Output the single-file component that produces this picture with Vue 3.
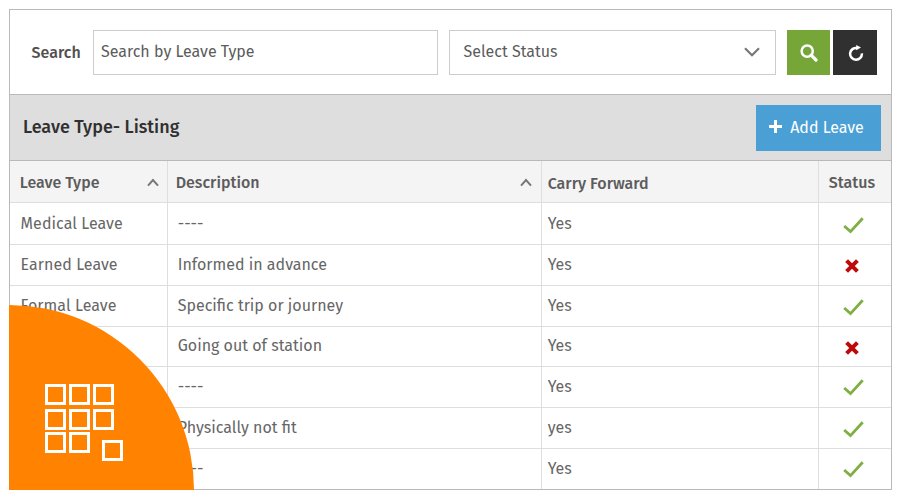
<script setup>
const rows = [
  { type: 'Medical Leave', description: '----', carry: 'Yes', active: true, height: 42 },
  { type: 'Earned Leave', description: 'Informed in advance', carry: 'Yes', active: false, height: 41 },
  { type: 'Formal Leave', description: 'Specific trip or journey', carry: 'Yes', active: true, height: 41 },
  { type: '', description: 'Going out of station', carry: 'Yes', active: false, height: 40, tight: true },
  { type: '', description: '----', carry: 'Yes', active: true, height: 41, raised: true },
  { type: '', description: 'Physically not fit', carry: 'yes', active: true, height: 41 },
  { type: '', description: '----', carry: 'Yes', active: true, height: 40, raised: true },
]
const squares = [
  [0, 0], [24, 0], [48, 0],
  [0, 25], [24, 25], [48, 25],
  [0, 48], [24, 48], [57, 56],
]
</script>

<template>
  <div class="page">
    <main class="panel">
      <div class="filters">
        <label class="label">Search</label>
        <div class="field search-field">Search by Leave Type</div>
        <div class="field select-field">
          <span>Select Status</span>
          <svg width="16" height="10" viewBox="0 0 16 10"><path d="M1 1.2 8 8.2 15 1.2" fill="none" stroke="#777" stroke-width="2.2" /></svg>
        </div>
        <button class="btn btn-search">
          <svg width="18" height="18" viewBox="0 0 18 18" fill="none" stroke="#fff">
            <circle cx="7.2" cy="7.1" r="5.6" stroke-width="2.5" />
            <path d="M11.2 11.2 16 16" stroke-width="3.2" stroke-linecap="round" />
          </svg>
        </button>
        <button class="btn btn-reset">
          <svg width="16" height="16" viewBox="0 0 16 16">
            <path d="M9.5 3.1A5.9 5.9 0 1 0 13.9 8.3" fill="none" stroke="#fff" stroke-width="2.5" />
            <path d="M8.2 0 13 2.6 8.2 5.2Z" fill="#fff" />
          </svg>
        </button>
      </div>

      <div class="titlebar">
        <h1>Leave Type- Listing</h1>
        <button class="add">
          <svg width="13" height="13" viewBox="0 0 13 13"><path d="M6.5 0V13M0 6.5H13" stroke="#fff" stroke-width="3" /></svg>
          <span>Add Leave</span>
        </button>
      </div>

      <div class="row head">
        <div class="cell type"><span>Leave Type</span>
          <svg width="12" height="9" viewBox="0 0 12 9"><path d="M1 7.6 6 2 11 7.6" fill="none" stroke="#777" stroke-width="2" /></svg>
        </div>
        <div class="cell desc"><span>Description</span>
          <svg width="12" height="9" viewBox="0 0 12 9"><path d="M1 7.6 6 2 11 7.6" fill="none" stroke="#777" stroke-width="2" /></svg>
        </div>
        <div class="cell carry">Carry Forward</div>
        <div class="cell status">Status</div>
      </div>
      <div
        v-for="(row, i) in rows"
        :key="i"
        class="row"
        :class="{ tight: row.tight, raised: row.raised }"
        :style="{ height: row.height + 'px' }"
      >
        <div class="cell type">{{ row.type }}</div>
        <div class="cell desc">{{ row.description }}</div>
        <div class="cell carry">{{ row.carry }}</div>
        <div class="cell status">
          <svg v-if="row.active" class="check" width="21" height="17" viewBox="0 0 21 17"><path d="M1.2 9 7.5 14.6 19.7 1.3" fill="none" stroke="#7fae43" stroke-width="2.8" /></svg>
          <svg v-else class="cross" width="14" height="14" viewBox="0 0 14 14"><path d="M1.6 1.6 12.4 12.4M12.4 1.6 1.6 12.4" stroke="#bd0b0b" stroke-width="4" /></svg>
        </div>
      </div>
    </main>

    <div class="badge">
      <svg width="78" height="77" viewBox="0 0 78 77" fill="none" stroke="#fff" stroke-width="3">
        <rect v-for="([x, y], i) in squares" :key="i" :x="x + 1.5" :y="y + 1.5" width="18" height="18" />
      </svg>
    </div>
  </div>
</template>

<style>
body { margin: 0; background: #fff; }
</style>

<style scoped>
* { box-sizing: border-box; }
.page {
  position: relative;
  width: 900px;
  height: 500px;
  padding: 9px 8px 10px 9px;
  overflow: hidden;
  background: #fff;
  color: #666;
  font: 16px/20px "Fira Sans", "Noto Sans", sans-serif;
}
.panel {
  display: flex;
  flex-direction: column;
  height: 481px;
  border: 1px solid #b9b9b9;
}
.filters {
  display: flex;
  flex: none;
  align-items: flex-start;
  height: 84px;
  padding: 20px 14px 0 21px;
}
.label {
  width: 62px;
  padding: 13px 0 0 0.6px;
  font-weight: 500;
  color: #505050;
}
.field {
  display: flex;
  align-items: center;
  height: 45px;
  border: 1px solid #ccc;
  padding-bottom: 2px;
  color: #5c5c5c;
}
.search-field { width: 345px; padding-left: 7px; }
.select-field {
  justify-content: space-between;
  width: 327px;
  margin-left: 11px;
  padding: 0 15px 2px 13.5px;
}
.select-field svg { margin-top: 1px; }
button {
  display: flex;
  align-items: center;
  justify-content: center;
  border: 0;
  padding: 0;
  font: inherit;
}
.btn { height: 45px; }
.btn-search { width: 43px; margin-left: 11px; background: #75a637; }
.btn-reset { width: 44px; margin-left: 3px; padding-left: 1px; background: #303031; }
.titlebar {
  display: flex;
  flex: none;
  align-items: center;
  justify-content: space-between;
  height: 67px;
  padding: 0 10px 0 13px;
  border: solid #b9b9b9;
  border-width: 1px 0;
  background: #dedede;
}
h1 {
  margin: 0;
  padding-bottom: 1px;
  font-size: 18px;
  font-weight: 500;
  color: #303030;
}
.add {
  width: 125px;
  height: 46px;
  gap: 8px;
  padding-right: 4px;
  background: #4a9fd5;
  color: #fff;
}
.add svg { margin-bottom: 3px; }
.row {
  display: grid;
  flex: none;
  grid-template-columns: 158px 374px 277px 1fr;
  border-bottom: 1px solid #dedede;
}
.row:last-child { border-bottom: 0; }
.head {
  height: 42px;
  background: #f4f4f4;
  font-weight: 500;
  color: #5c5c5c;
}
.cell {
  display: flex;
  align-items: center;
  border-right: 1px solid #dedede;
  padding-left: 10.6px;
  white-space: nowrap;
}
.type { letter-spacing: 0.06px; }
.cell:last-child { border-right: 0; }
.desc { padding-left: 9.7px; }
.carry { padding-left: 5.7px; }
.status { justify-content: center; padding: 0 4px 0 0; }
.head .type, .head .desc { justify-content: space-between; }
.head .type { padding: 2px 8px 0 9.7px; letter-spacing: 0; }
.head .desc { padding: 2px 9px 0 7.7px; }
.head .carry { padding-top: 4px; }
.head .status { padding-top: 2px; padding-right: 6px; }
.check { margin-top: 3px; }
.raised .check { margin-top: 1px; }
.cross { margin-top: 2px; margin-right: 2px; }
.tight .desc, .tight .carry { padding-bottom: 2px; }
.badge {
  position: absolute;
  left: 9px;
  top: 305px;
  width: 185px;
  height: 185px;
  padding: 79px 0 0 36px;
  border-radius: 0 185px 0 0;
  background: #ff8200;
}
.badge svg { display: block; }
</style>
